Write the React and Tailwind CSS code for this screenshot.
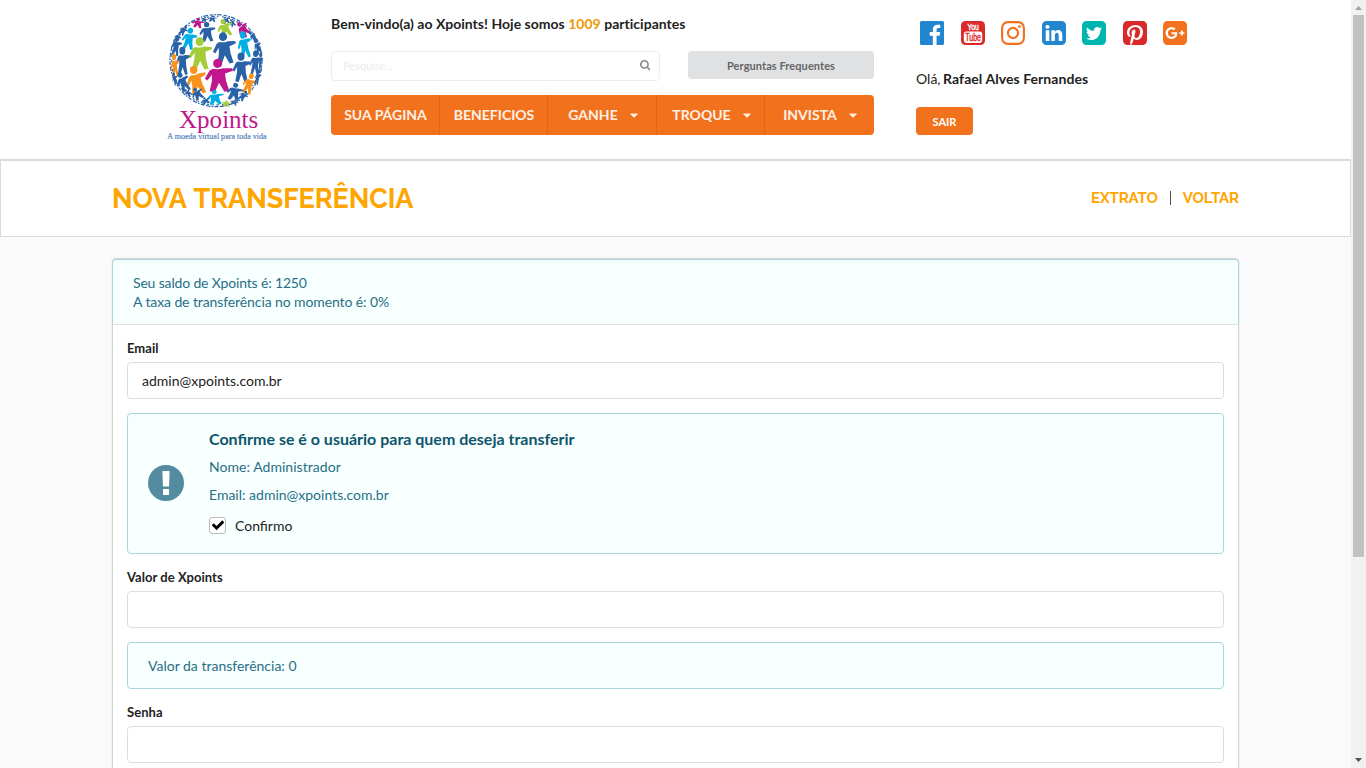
import React from 'react';

const SQUARE =
  'v960q0 119-84.5 203.5t-203.5 84.5h-960q-119 0-203.5-84.5t-84.5-203.5v-960q0-119 84.5-203.5t203.5-84.5h960q119 0 203.5 84.5t84.5 203.5z';

const socials = [
  {
    name: 'facebook',
    color: 'text-[#2185d0]',
    d: 'M1579 128q35 0 60 25t25 60v1366q0 35-25 60t-60 25h-391v-595h199l30-232h-229v-148q0-56 23.5-84t91.5-28l122-1v-207q-63-9-178-9-136 0-217.5 80t-81.5 226v171h-200v232h200v595h-735q-35 0-60-25t-25-60v-1366q0-35 25-60t60-25h1366z',
  },
  { name: 'youtube', color: 'text-[#db2828]' },
  {
    name: 'instagram',
    color: 'text-[#f2711c]',
    d: 'M1152 896q0-106-75-181t-181-75-181 75-75 181 75 181 181 75 181-75 75-181zm138 0q0 164-115 279t-279 115-279-115-115-279 115-279 279-115 279 115 115 279zm108-410q0 38-27 65t-65 27-65-27-27-65 27-65 65-27 65 27 27 65zm-502-220q-7 0-76.5-.5t-105.5 0-96.5 3-103 10-71.5 18.5q-50 20-88 58t-58 88q-11 29-18.5 71.5t-10 103-3 96.5 0 105.5.5 76.5-.5 76.500 0 105.5 3 96.5 10 103 18.5 71.5q20 50 58 88t88 58q29 11 71.5 18.5t103 10 96.5 3 105.5 0 76.5-.5 76.5.5 105.5 0 96.5-3 103-10 71.5-18.5q50-20 88-58t58-88q11-29 18.5-71.5t10-103 3-96.5 0-105.5-.5-76.5.5-76.5 0-105.5-3-96.5-10-103-18.5-71.5q-20-50-58-88t-88-58q-29-11-71.5-18.5t-103-10-96.5-3-105.5 0-76.5.5zm768 630q0 229-5 317-10 208-124 322t-322 124q-88 5-317 5t-317-5q-208-10-322-124t-124-322q-5-88-5-317t5-317q10-208 124-322t322-124q88-5 317-5t317 5q208 10 322 124t124 322q5 88 5 317z',
  },
  {
    name: 'linkedin',
    color: 'text-[#2185d0]',
    d: 'M365 1414h231v-694h-231v694zm246-908q-1-52-36-86t-93-34-94.5 34-36.5 86q0 51 35.5 85.5t92.5 34.5h1q59 0 95-34.5t36-85.5zm585 908h231v-398q0-154-73-233t-193-79q-136 0-209 117h2v-101h-231q3 66 0 694h231v-388q0-38 7-56 15-35 45-59.5t74-24.5q116 0 116 157v371zm468-998' + SQUARE,
  },
  {
    name: 'twitter',
    color: 'text-[#00b5ad]',
    d: 'M1408 610q-56 25-121 34 68-40 93-117-65 38-134 51-61-66-153-66-87 0-148.5 61.5t-61.5 148.5q0 29 5 48-129-7-242-65t-192-155q-29 50-29 106 0 114 91 175-47-1-100-26v2q0 75 50 133.5t123 72.5q-29 8-51 8-13 0-39-4 21 63 74.5 104t121.5 42q-116 90-261 90-26 0-50-3 148 94 322 94 112 0 210-35.5t168-95 120.5-137 75-162 24.5-168.5q0-18-1-27 63-45 105-109zm256-194' + SQUARE,
  },
  {
    name: 'pinterest',
    color: 'text-[#db2828]',
    d: 'M1376 128q119 0 203.5 84.5t84.5 203.5v960q0 119-84.5 203.5t-203.5 84.5h-725q85-122 108-210 9-34 53-209 21 39 73.5 67t112.5 28q181 0 295.5-147.5t114.5-373.5q0-84-35-162.5t-96.5-139-152.5-97-197-36.5q-104 0-194.5 28.5t-153 76.5-107.5 109.5-66.5 128-21.5 132.5q0 102 39.5 180t116.5 110q13 5 23.5 0t14.5-19q10-44 15-61 6-23-11-42-50-62-50-150 0-150 103.5-256.5t270.5-106.5q149 0 232.5 81t83.5 210q0 168-67.5 286t-173.5 118q-60 0-97-43.5t-23-103.5q8-34 26.5-92.5t29.5-102 11-74.5q0-49-26.5-81.5t-75.5-32.5q-61 0-103.5 56.5t-42.5 139.5q0 72 24 121l-98 414q-24 100-7 254h-183q-119 0-203.5-84.5t-84.5-203.5v-960q0-119 84.5-203.5t203.5-84.5h960z',
  },
  {
    name: 'google plus',
    color: 'text-[#f2711c]',
    d: 'M1045 905q0-26-6-64h-362v132h217q-3 24-16.5 50t-37.5 53-66.5 44.5-96.5 17.5q-99 0-169-71t-70-171 70-171 169-71q92 0 153 59l104-101q-108-100-257-100-160 0-272 112.5t-112 271.5 112 271.5 272 112.5q165 0 266.5-105t101.5-270zm345 46h109v-110h-109v-110h-110v110h-110v110h110v110h110v-110zm274-535' + SQUARE,
  },
];

function Social({ d, color }) {
  if (d) {
    return (
      <svg className={`size-7 ${color}`} viewBox="0 0 1792 1792" fill="currentColor">
        <path d={d} />
      </svg>
    );
  }
  return (
    <svg className={`size-7 ${color}`} viewBox="0 0 28 28" fill="currentColor">
      <rect x="2" y="2" width="24" height="24" rx="4.5" />
      <rect x="4.8" y="12.4" width="18.4" height="11.6" rx="2.4" fill="#fff" />
      <g fontFamily="'Liberation Sans'">
        <text x="8.4" y="10.8" fontSize="8.8" fill="#fff" stroke="#fff" strokeWidth="0.4" textLength="11.4" lengthAdjust="spacingAndGlyphs">You</text>
        <text x="6.2" y="22" fontSize="10" stroke="currentColor" strokeWidth="0.4" textLength="15.8" lengthAdjust="spacingAndGlyphs">Tube</text>
      </g>
    </svg>
  );
}

const B = '#2a62a8';
const G = '#a4cd39';
const M = '#c0178c';
const C = '#00aee6';
const O = '#f7941e';

// x, y of the head, figure height, horizontal squeeze, rotation, colour
const people = [
  [130, 43, 28, 1.5, 10, M],
  [172, 34, 18, 1.8, 5, B],
  [150, 38, 16, 1.5, 20, B],
  [210, 38, 20, 1.6, -15, B],
  [228, 46, 22, 1.1, -25, B],
  [92, 66, 30, 0.9, 35, B],
  [74, 88, 30, 0.7, 35, B],
  [155, 59, 56, 0.98, -2, B],
  [204, 50, 50, 1.1, -14, G],
  [253, 58, 48, 0.85, -38, M],
  [106, 77, 62, 0.82, 10, C],
  [67, 101, 58, 0.6, 10, B],
  [134, 110, 92, 0.86, 0, G],
  [204, 95, 90, 0.88, -4, B],
  [263, 90, 76, 0.62, -8, C],
  [286, 84, 36, 0.6, -35, B],
  [302, 108, 46, 0.55, -18, B],
  [82, 137, 80, 0.6, 0, B],
  [57, 156, 66, 0.45, -4, O],
  [258, 155, 84, 0.72, 0, B],
  [302, 146, 70, 0.58, 4, B],
  [317, 150, 54, 0.3, 3, B],
  [116, 195, 82, 0.86, -12, O],
  [188, 175, 94, 1.02, -2, M],
  [75, 210, 58, 0.75, -22, B],
  [289, 214, 60, 0.72, 18, O],
  [312, 200, 44, 0.45, 14, B],
  [242, 241, 50, 1.1, 12, B],
  [178, 261, 42, 1.4, -4, C],
  [120, 254, 36, 1.2, -28, B],
  [272, 262, 32, 0.9, 38, B],
  [148, 280, 20, 1.8, -20, B],
  [92, 256, 26, 0.8, -45, B],
  [214, 289, 17, 2.2, 8, G],
  [240, 286, 16, 1.8, 20, B],
  [56, 208, 38, 0.5, -14, B],
];

function Person({ x, y, h, w, r, color }) {
  const s = h / 100;
  return (
    <g transform={`translate(${x} ${y}) rotate(${r}) scale(${s * w} ${s})`} fill={color}>
      <ellipse cx="0" cy="0" rx={14.5 / Math.sqrt(w)} ry="14.5" />
      <path d="M-15 17 Q0 21 17 16 L45 17 L47 25 L22 33 L24 56 L33 88 L18 91 L2 62 L-12 91 L-28 88 L-20 56 L-19 36 L-34 54 L-42 48 L-26 22 Z" />
    </g>
  );
}

function Logo() {
  return (
    <svg className="block h-[145px] w-[125px]" viewBox="0 0 375 435">
      <circle cx="183" cy="167" r="138" fill="none" stroke={B} strokeWidth="3.5" strokeDasharray="11 4 5 3 14 5" />
      <circle cx="183" cy="167" r="133" fill="none" stroke={B} strokeWidth="3.5" strokeDasharray="6 9 9 7 4 11" />
      {people.map(([x, y, h, w, r, color], i) => (
        <Person key={i} x={x} y={y} h={h} w={w} r={r} color={color} />
      ))}
      <g fontFamily="'Liberation Serif', serif">
        <text x="72" y="368" fontSize="74" fill={M} textLength="238" lengthAdjust="spacingAndGlyphs">Xpoints</text>
        <text x="37" y="402" fontSize="22" fill="#4a7ab8" stroke="#4a7ab8" strokeWidth="0.4" textLength="298" lengthAdjust="spacingAndGlyphs">A moeda virtual para toda vida</text>
      </g>
    </svg>
  );
}

function Caret() {
  return (
    <svg className="mt-px h-[5px] w-2" viewBox="0 0 8 5" fill="currentColor">
      <path d="M0.7 0.5H7.3Q8 0.7 7.5 1.3L4.4 4.4Q4 4.7 3.6 4.4L0.5 1.3Q0 0.7 0.7 0.5Z" />
    </svg>
  );
}

const menu = [
  { label: 'SUA PÁGINA', box: 'w-[109px] border-r pl-px' },
  { label: 'BENEFICIOS', box: 'w-[108px] border-r pl-px' },
  { label: 'GANHE', caret: true, box: 'w-[109px] border-r pl-0.5' },
  { label: 'TROQUE', caret: true, box: 'w-[108px] border-r pl-0.5' },
  { label: 'INVISTA', caret: true, box: 'w-[109px] pl-px' },
];

function Header() {
  return (
    <header className="flex h-40 shrink-0 items-start border-b border-[#d9d9da] bg-white">
      <div className="ml-[155px] w-44 pt-[5px]">
        <Logo />
      </div>
      <div className="w-[543px]">
        <p className="pt-[14px] leading-5 font-bold tracking-[0.02px]">
          Bem-vindo(a) ao Xpoints! Hoje somos <span className="text-[#eb9a05]">1009</span> participantes
        </p>
        <div className="mt-[17px] flex items-start">
          <div className="flex h-[30px] w-[329px] items-center justify-between rounded border border-[#ededee] pr-[9px] pl-[11px]">
            <span className="text-[11px] text-[#ececec]">Pesquise...</span>
            <svg className="mb-px size-[10.500px] text-[#8c8c8c]" viewBox="64 128 1664 1664" fill="currentColor">
              <path d="M1216 832q0-185-131.5-316.5t-316.5-131.5-316.5 131.5-131.5 316.5 131.5 316.5 316.5 131.5 316.5-131.5 131.5-316.5zm512 832q0 52-38 90t-90 38q-54 0-90-38l-343-342q-179 124-399 124-143 0-273.5-55.5t-225-150-150-225-55.5-273.5 55.5-273.5 150-225 225-150 273.5-55.5 273.5 55.5 225 150 150 225 55.5 273.5q0 220-124 399l343 343q37 37 37 90z" />
            </svg>
          </div>
          <button className="ml-7 flex h-7 w-[186px] items-center justify-center rounded bg-[#e0e1e2] pt-0.5 text-[11px] font-bold tracking-[0.07px] text-[#666]">
            Perguntas Frequentes
          </button>
        </div>
        <nav className="mt-[14px] flex h-10 overflow-hidden rounded bg-[#f2711c] font-bold text-white/90">
          {menu.map((m) => (
            <a key={m.label} className={`flex items-center justify-center gap-3 border-[#dc681c] ${m.box}`}>
              {m.label}
              {m.caret && <Caret />}
            </a>
          ))}
        </nav>
      </div>
      <div className="ml-[42px]">
        <div className="ml-0.5 flex gap-[12.5px] pt-[19px]">
          {socials.map((s) => (
            <Social key={s.name} d={s.d} color={s.color} />
          ))}
        </div>
        <p className="mt-[22px] leading-5">
          Olá, <b className="-ml-px tracking-[0.06px]">Rafael Alves Fernandes</b>
        </p>
        <button className="mt-[18px] flex h-7 w-[57px] items-center justify-center rounded bg-[#f2711c] pt-0.5 text-[11px] font-bold text-white">
          SAIR
        </button>
      </div>
    </header>
  );
}

function Field({ label, value }) {
  return (
    <div className="mb-[14px]">
      <label className="block h-[23px] text-[13px] leading-[18px] font-bold tracking-[0.04px]">{label}</label>
      <div className="flex h-[37px] items-center rounded border border-[#dededf] bg-white px-[14px]">{value}</div>
    </div>
  );
}

function Scrollbar() {
  return (
    <div className="flex w-[15px] shrink-0 flex-col items-center bg-[#f1f1f1]">
      <svg className="h-[15px] w-[15px] text-[#a3a3a3]" viewBox="0 0 15 15" fill="currentColor">
        <path d="M4 10h7L7.500 6z" />
      </svg>
      <div className="h-[542px] w-[11px] bg-[#c1c1c1]" />
      <svg className="mt-auto h-[15px] w-[15px] text-[#505050]" viewBox="0 0 15 15" fill="currentColor">
        <path d="M4 5h7L7.500 9z" />
      </svg>
    </div>
  );
}

export default function App() {
  return (
    <div className="flex h-[768px] w-[1366px] overflow-hidden bg-[#fafafa] font-['Lato',sans-serif] text-sm text-[#222222]">
      <div className="flex w-[1351px] flex-col">
        <Header />
        <div className="flex h-[77px] shrink-0 items-center justify-between border border-[#dbdbdc] bg-white px-[111px] font-['Raleway','Lato',sans-serif] font-bold text-[#ffa500]">
          <h1 className="text-[27px] leading-9 tracking-[-0.08px] [word-spacing:2px]">NOVA TRANSFERÊNCIA</h1>
          <div className="flex items-center text-[15px] tracking-[-0.08px]">
            <a>EXTRATO</a>
            <span className="mr-3 ml-3 h-[14px] w-px bg-[#505050]" />
            <a>VOLTAR</a>
          </div>
        </div>
        <main className="mx-28 mt-[21px] h-[620px] shrink-0 rounded border border-[#d4d4d5] bg-white shadow-[0_1px_2px_0_rgba(34,36,38,0.15)]">
          <div className="-mx-px h-[65px] rounded-t border border-b-0 border-[#a9d5de] bg-[#f8ffff] px-5 pt-[13px] leading-[19px] text-[#276f86]">
            <p className="tracking-[-0.16px]">Seu saldo de Xpoints é: 1250</p>
            <p className="tracking-[-0.1px]">A taxa de transferência no momento é: 0%</p>
          </div>
          <form className="border-t border-[#dededf] p-[14px]">
            <Field label="Email" value="admin@xpoints.com.br" />
            <div className="mb-[14px] flex h-[141px] items-center rounded border border-[#a9d5de] bg-[#f8ffff] px-5 text-[#276f86]">
              <svg className="mb-0.5 size-9 text-[#528c9e]" viewBox="0 0 36 36">
                <circle cx="18" cy="18" r="18" fill="currentColor" />
                <path d="M14.900 6h6.200q.5 0 .5.600l-.5 14.400q0 .6-.6.600h-5q-.6 0-.6-.6l-.5-14.400q0-.6.5-.6zM15.600 24h4.900q.6 0 .6.600v4.800q0 .6-.6.600h-4.900q-.6 0-.6-.6v-4.800q0-.6.6-.6z" fill="#fff" />
              </svg>
              <div className="mb-1 ml-[25px]">
                <h2 className="text-base leading-5 font-bold text-[#0e566c]">
                  Confirme se é o usuário para quem deseja transferir
                </h2>
                <p className="mt-2 leading-5 tracking-[0.04px]">Nome: Administrador</p>
                <p className="mt-2 leading-5">Email: admin@xpoints.com.br</p>
                <div className="mt-3 flex h-[17px] items-center text-[#222222]">
                  <span className="flex size-[17px] items-center justify-center rounded-[3px] border border-[#b9bbbc] bg-white">
                    <svg className="mb-px size-[14px] text-black" viewBox="0 0 1792 1792" fill="currentColor">
                      <path d="M1671 566q0 40-28 68l-724 724-136 136q-28 28-68 28t-68-28l-136-136-362-362q-28-28-28-68t28-68l136-136q28-28 68-28t68 28l294 295 656-657q28-28 68-28t68 28l136 136q28 28 28 68z" />
                    </svg>
                  </span>
                  <span className="ml-[9px]">Confirmo</span>
                </div>
              </div>
            </div>
            <Field label="Valor de Xpoints" />
            <div className="mb-[14px] flex h-[47px] items-center rounded border border-[#a9d5de] bg-[#f8ffff] px-5 text-[#276f86]">
              Valor da transferência: 0
            </div>
            <Field label="Senha" />
          </form>
        </main>
      </div>
      <Scrollbar />
    </div>
  );
}
